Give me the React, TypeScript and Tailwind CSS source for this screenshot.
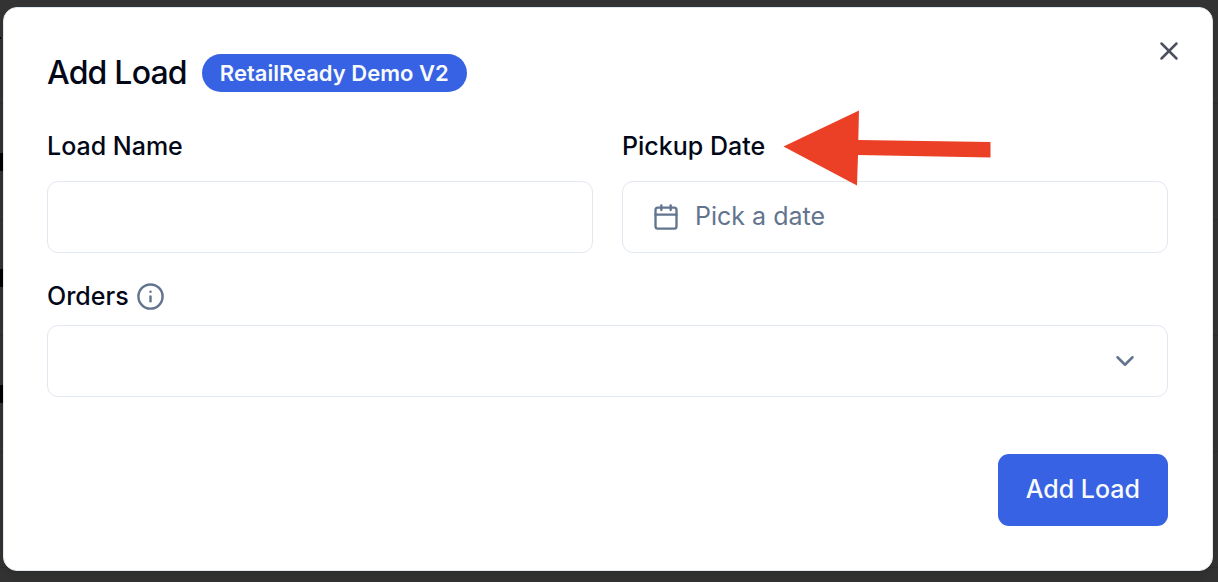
import { Calendar, ChevronDown, Info, X } from "lucide-react";

function RowsBehind() {
  return (
    <div aria-hidden="true" className="absolute inset-0 flex flex-col overflow-hidden">
      <div className="flex h-[104px] shrink-0 items-center border-b border-[#2d2d2d]">
        <div className="mb-7 h-0.5 w-px bg-black" />
      </div>
      {["first", "second", "third", "fourth"].map((row, index) => (
        <div key={row} className="flex h-29 shrink-0 items-center border-b border-[#2d2d2d]">
          {index < 3 && <div className="h-[18px] w-[3px] bg-black" />}
        </div>
      ))}
    </div>
  );
}

function PointerArrow() {
  return (
    <svg
      aria-hidden="true"
      viewBox="0 0 208 76"
      className="pointer-events-none absolute -top-[18px] left-[161px] h-[76px] w-[208px]"
    >
      <path d="M0.500 36.500L76 0.500L75.300 30L207.500 32V47.500L75 45L74 75.500Z" fill="#eb4026" />
    </svg>
  );
}

export default function App() {
  return (
    <main className="relative min-h-screen bg-[#333333] pt-[7px] pr-[5px] pb-[11px] pl-[3px] font-['Inter',sans-serif] text-[#020817]">
      <RowsBehind />
      <div
        role="dialog"
        aria-labelledby="dialog-title"
        className="relative flex flex-col gap-[34px] rounded-[14px] border border-slate-200 bg-white py-11 pr-11 pl-[43px] shadow-lg"
      >
        <button
          type="button"
          aria-label="Close"
          className="absolute top-7 right-7 text-[#4c5160]"
        >
          <X className="size-[30px]" strokeWidth={2} />
        </button>

        <header className="flex h-[42px] items-center gap-[15px]">
          <h2 id="dialog-title" className="text-[32px] leading-10 font-medium tracking-tight">
            Add Load
          </h2>
          <span className="flex h-[38px] items-center rounded-full bg-[#3762e3] px-[18px] text-[22px] leading-7 font-semibold text-slate-50">
            RetailReady Demo V2
          </span>
        </header>

        <form className="flex flex-col gap-[25px]">
          <div className="grid grid-cols-2 gap-[29px]">
            <div className="flex flex-col gap-[17px]">
              <label htmlFor="load-name" className="text-[25px] leading-9 font-medium">
                Load Name
              </label>
              <input
                id="load-name"
                type="text"
                className="h-[72px] w-full rounded-[11px] border border-slate-200 px-6 text-[25px] outline-none"
              />
            </div>
            <div className="relative flex flex-col gap-[17px]">
              <label htmlFor="pickup-date" className="text-[25px] leading-9 font-medium">
                Pickup Date
              </label>
              <button
                id="pickup-date"
                type="button"
                className="flex h-[72px] w-full items-center gap-[15px] rounded-[11px] border border-slate-200 px-[29px] text-[25px] text-slate-500"
              >
                <Calendar className="size-7" strokeWidth={2} />
                Pick a date
              </button>
              <PointerArrow />
            </div>
          </div>

          <div className="flex flex-col gap-[11px]">
            <div className="flex items-center gap-[7px]">
              <label htmlFor="orders" className="text-[25px] leading-9 font-medium">
                Orders
              </label>
              <Info className="size-[29px] text-slate-500" strokeWidth={2} />
            </div>
            <div className="grid items-center">
              <select
                id="orders"
                className="col-start-1 row-start-1 h-[72px] w-full appearance-none rounded-[11px] border border-slate-200 bg-white px-6 text-[25px] outline-none"
              />
              <ChevronDown
                className="pointer-events-none col-start-1 row-start-1 mr-7 size-[30px] justify-self-end text-slate-500"
                strokeWidth={2}
              />
            </div>
          </div>

          <div className="flex justify-end pt-8">
            <button
              type="button"
              className="h-[72px] rounded-[11px] bg-[#3762e3] px-7 text-[25px] font-medium text-slate-50"
            >
              Add Load
            </button>
          </div>
        </form>
      </div>
    </main>
  );
}
